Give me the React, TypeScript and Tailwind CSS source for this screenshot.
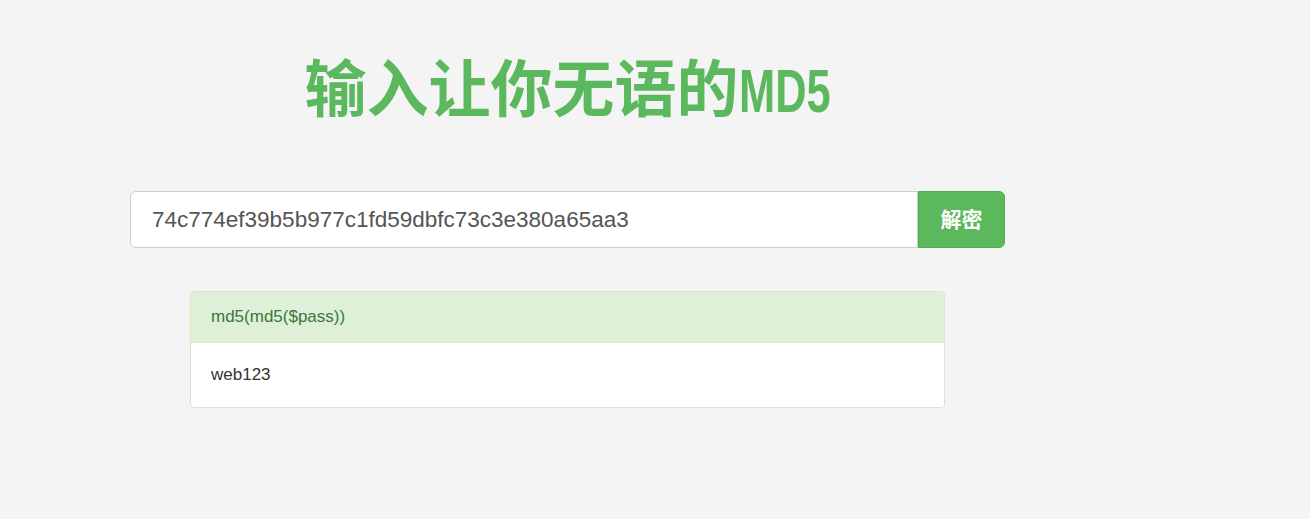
import React from "react";

const sans = "font-['Liberation_Sans','Noto_Sans_CJK_SC',sans-serif]";

export default function App() {
  return (
    <div className={`min-h-screen bg-[#f4f4f4] ${sans}`}>
      <div className="ml-[130px] w-[875px] pt-[51px]">
        <h1 className="text-center text-[62px] leading-[68px] font-bold text-[#5cb85c] font-['Noto_Sans_CJK_SC',sans-serif]">
          输入让你无语的
          <span className="inline-block origin-left scale-x-70 -mr-[39px] font-['Liberation_Sans',sans-serif]">
            MD5
          </span>
        </h1>

        <div className="mt-[66px] flex h-[57px]">
          <input
            readOnly
            value="74c774ef39b5b977c1fd59dbfc73c3e380a65aa3"
            className="h-full flex-1 rounded-l-[6px] border border-[#ccc] bg-white px-[21px] text-[22.5px] text-[#555] outline-none"
          />
          <button className="h-full w-[87px] rounded-r-[6px] border border-[#4cae4c] bg-[#5cb85c] text-[21px] font-bold text-white">
            解密
          </button>
        </div>

        <div className="mx-[60px] mt-[43px] overflow-hidden rounded-[4px] border border-[#d6e9c6] bg-white text-[17px]">
          <div className="flex h-[51px] items-center border-b border-[#d6e9c6] bg-[#dff0d8] px-[20px] text-[#3c763d]">
            md5(md5($pass))
          </div>
          <div className="flex h-[64px] items-center px-[20px] text-[#333]">web123</div>
        </div>
      </div>
    </div>
  );
}
